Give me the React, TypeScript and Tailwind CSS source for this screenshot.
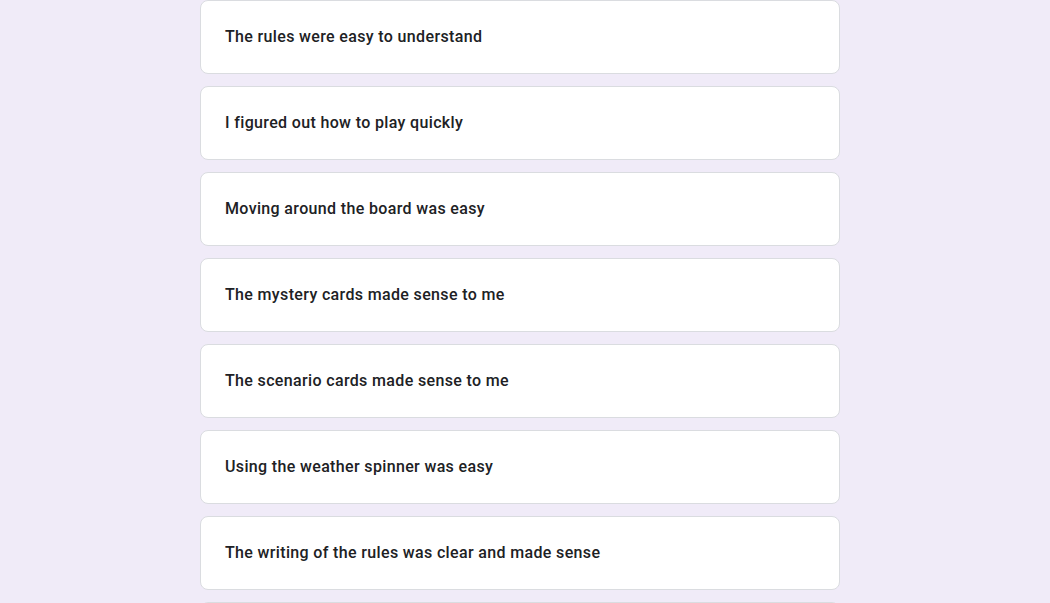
const statements = [
  "The rules were easy to understand",
  "I figured out how to play quickly",
  "Moving around the board was easy",
  "The mystery cards made sense to me",
  "The scenario cards made sense to me",
  "Using the weather spinner was easy",
  "The writing of the rules was clear and made sense",
];

const App = () => {
  return (
    <div className="bg-[#f0ebf8] flex justify-center overflow-hidden h-[603px] pr-[10px]">
      <div className="w-[640px] flex flex-col gap-3">
        {statements.map((s) => (
          <div
            key={s}
            className="bg-white border border-[#dadce0] rounded-lg h-[74px] shrink-0 flex items-center px-6"
          >
            <span className="text-[16px] font-medium text-[#202124] tracking-[0.35px] font-['Roboto',sans-serif]">
              {s}
            </span>
          </div>
        ))}
        <div className="bg-white border border-[#dadce0] rounded-lg h-[74px] shrink-0" />
      </div>
    </div>
  );
};

export default App;
